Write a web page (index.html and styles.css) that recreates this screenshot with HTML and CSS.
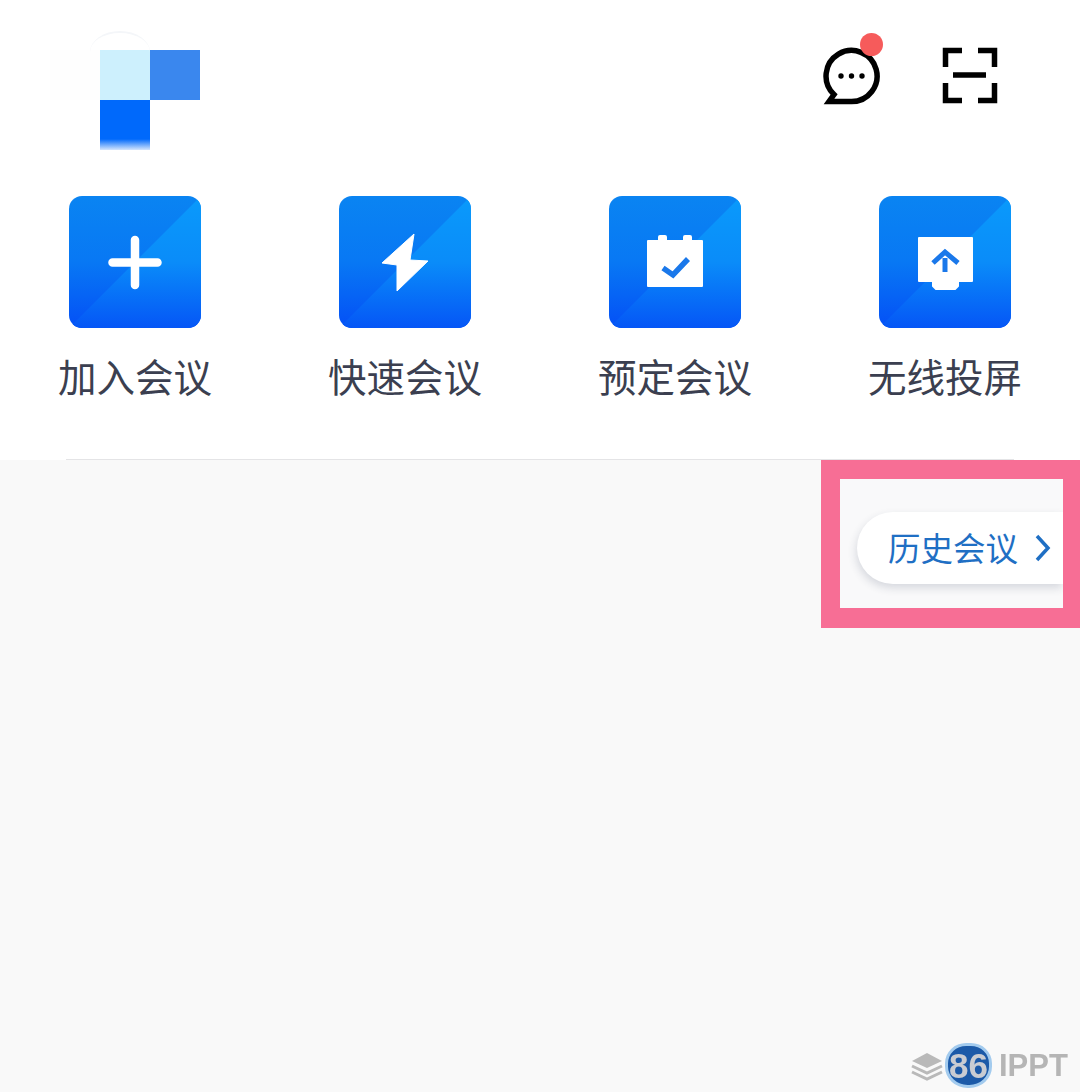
FILE: index.html
```html
<!DOCTYPE html>
<html lang="zh">
<head>
    <meta charset="UTF-8">
    <title>会议</title>
    <link rel="stylesheet" href="styles.css">
</head>
<body>
<section class="top">
    <header class="header">
        <div class="logo">
            <span class="logo-light"></span>
            <span class="logo-mid"></span>
            <span class="logo-dark"></span>
        </div>
        <div class="actions">
            <span class="msg">
                <svg width="62" height="62" viewBox="821 44 62 62">
                    <path d="M851.5 100.500H829L834 93.500A25.500 25.500 0 1 1 851.500 100.500Z" fill="none" stroke="#000" stroke-width="5.500"/>
                    <circle cx="841" cy="75" r="2.700"/>
                    <circle cx="851.500" cy="75" r="2.700"/>
                    <circle cx="862" cy="75" r="2.700"/>
                </svg>
                <i class="dot"></i>
            </span>
            <svg width="60" height="60" viewBox="940 45 60 60">
                <path d="M962 50.500H945.500V67M978 50.500H994.500V67M945.500 83V100.500H962M994.500 83V100.500H978M953 75H986" fill="none" stroke="#000" stroke-width="5.500"/>
            </svg>
        </div>
    </header>

    <nav class="grid">
        <a class="item">
            <span class="tile">
                <svg width="132" height="132" viewBox="0 0 132 132">
                    <path d="M66 44V89M43.500 66.500H88.500" fill="none" stroke="#fff" stroke-width="8.500" stroke-linecap="round"/>
                </svg>
            </span>
            <span class="label">加入会议</span>
        </a>
        <a class="item">
            <span class="tile">
                <svg width="132" height="132" viewBox="0 0 132 132">
                    <path d="M75 38L43 67L58 69L58 95L89 65L71 64Z" fill="#fff" stroke="#fff" stroke-width="1" stroke-linejoin="round"/>
                </svg>
            </span>
            <span class="label">快速会议</span>
        </a>
        <a class="item">
            <span class="tile">
                <svg width="132" height="132" viewBox="0 0 132 132">
                    <path d="M39 45H50V41Q50 40 51 40H56Q57 40 57 41V45H75V41Q75 40 76 40H81Q82 40 82 41V45H93V90H39Z" fill="#fff" stroke="#fff" stroke-width="2" stroke-linejoin="round"/>
                    <path d="M54 72L64 79L79 63" fill="none" stroke="#1a78ea" stroke-width="5.500"/>
                </svg>
            </span>
            <span class="label">预定会议</span>
        </a>
        <a class="item">
            <span class="tile">
                <svg width="132" height="132" viewBox="0 0 132 132">
                    <path d="M40 42H93V85H79V90L76 93H57L54 90V85H40Z" fill="#fff" stroke="#fff" stroke-width="2" stroke-linejoin="round"/>
                    <path d="M54 67L66 56L79 67M66 62V76" fill="none" stroke="#1a78ea" stroke-width="5"/>
                </svg>
            </span>
            <span class="label">无线投屏</span>
        </a>
    </nav>
    <div class="line"></div>
</section>

<main class="main">
    <div class="frame">
        <a class="pill">
            <span class="pill-text">历史会议</span>
            <svg width="16" height="28" viewBox="0 0 16 28">
                <path d="M2 2L13 14L2 26" fill="none" stroke="#1f6fc4" stroke-width="3.500"/>
            </svg>
        </a>
    </div>
</main>

<div class="mark">
    <svg width="34" height="30" viewBox="0 0 34 30">
        <path d="M17 2L32 10L17 17L2 10Z" fill="#b9b9b9"/>
        <path d="M2 15L17 22L32 15M2 21L17 28L32 21" fill="none" stroke="#b9b9b9" stroke-width="3"/>
    </svg>
    <span class="screen">86</span>
    <span class="mark-text">IPPT</span>
</div>
</body>
</html>
```

FILE: styles.css
```css
* {
    box-sizing: border-box;
}
body {
    margin: 0;
    height: 1092px;
    position: relative;
    overflow: hidden;
    background: #f9f9f9;
    font-family: "Noto Sans CJK SC", "Noto Sans", sans-serif;
}
.top {
    background: #fff;
    height: 460px;
}
.header {
    display: flex;
    justify-content: space-between;
    height: 196px;
    padding: 50px 80px 0 100px;
}
.logo {
    position: relative;
    display: grid;
    grid-template-columns: 50px 50px;
    grid-template-rows: 50px 50px;
}
/* faint ghost arc above the logo */
.logo::before {
    content: "";
    position: absolute;
    left: -10px;
    top: -19px;
    width: 60px;
    height: 40px;
    border-radius: 50%;
    border-top: 2px solid #f4f6f9;
}
.logo-light {
    background: #cdf0fd;
    box-shadow: -50px 0 0 #fefefe;
}
.logo-mid {
    background: #3a87ee;
}
.logo-dark {
    background: linear-gradient(#0069fb 78%, #d5e6fd);
}
.actions {
    display: flex;
    gap: 57px;
    margin-top: -5px;
}
.msg {
    position: relative;
    display: block;
    width: 62px;
    height: 62px;
}
.dot {
    position: absolute;
    left: 39px;
    top: -12px;
    width: 23px;
    height: 23px;
    border-radius: 50%;
    background: #f65b5b;
}
.grid {
    display: grid;
    grid-template-columns: repeat(4, 270px);
}
.item {
    display: flex;
    flex-direction: column;
    align-items: center;
}
.tile {
    position: relative;
    display: block;
    width: 132px;
    height: 132px;
    border-radius: 13px;
    overflow: hidden;
    background: linear-gradient(to bottom, #0a84f2 0, #0878f4 50%, #0450f6 100%);
}
.tile::before {
    content: "";
    position: absolute;
    inset: 0;
    clip-path: polygon(100% 0, 100% 100%, 0 100%);
    background: linear-gradient(to bottom, #0a9afb 0, #0a8cf9 50%, #0556f6 100%);
}
.tile svg {
    position: relative;
    display: block;
}
.label {
    margin-top: 19px;
    font-size: 38.500px;
    line-height: 56px;
    color: #3b3f50;
}
.line {
    height: 1px;
    margin: 56px 66px 0;
    background: #e4e4e6;
}
.main {
    display: flex;
    justify-content: flex-end;
}
.frame {
    width: 259px;
    height: 168px;
    padding-top: 33px;
    padding-left: 17px;
    border: solid #f76e95;
    border-width: 19px 17px 20px 19px;
    background: #f9f9fa;
}
.pill {
    display: flex;
    align-items: center;
    gap: 17px;
    width: 206px;
    height: 72px;
    padding-left: 31px;
    border-radius: 36px 0 0 36px;
    background: #fff;
    box-shadow: -1px 4px 8px rgba(40, 50, 80, .16);
    clip-path: inset(-14px 0 -14px -14px);
    font-size: 32.500px;
    color: #1f6fc4;
}
.pill-text {
    margin-top: -4px;
}
.mark {
    position: absolute;
    left: 910px;
    top: 1043px;
    display: flex;
    align-items: center;
    gap: 1px;
    height: 45px;
    filter: blur(.6px);
}
.screen {
    width: 47px;
    height: 45px;
    border-radius: 45% 45% 48% 48%;
    border: 3px solid #a3cbee;
    background: #1c5aa8;
    font-family: "Liberation Sans", sans-serif;
    font-size: 35px;
    font-weight: bold;
    line-height: 40px;
    color: #c9ccd2;
    text-align: center;
}
.mark-text {
    margin-left: 6px;
    font-family: "Liberation Sans", sans-serif;
    font-size: 31px;
    font-weight: bold;
    color: #b5b5b5;
}
```
